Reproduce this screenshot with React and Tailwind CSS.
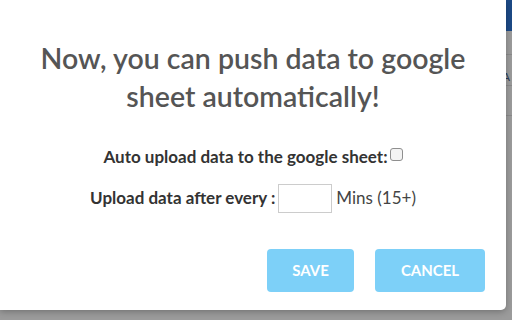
export default function App() {
  return (
    <div className="relative w-[512px] h-[320px] overflow-hidden bg-[#9b9b9b] font-['Lato','Liberation_Sans',sans-serif]">
      {/* dimmed page behind the dialog */}
      <div className="flex flex-col h-full">
        <div className="h-[31px] bg-[#1c4a86]" />
        <div className="h-[24px] border-b border-[#8a8a8a]" />
        <div className="h-[31px] border-b border-[#8a8a8a] flex items-end justify-end pr-[2px] text-[11px] text-[#2a3a55]">A</div>
        <div className="h-[30px] border-b border-[#8a8a8a]" />
      </div>

      {/* dialog */}
      <div className="absolute left-0 top-0 w-[506px] h-[310px] bg-white rounded-br-[5px] shadow-[0_2px_6px_rgba(0,0,0,0.25)] flex flex-col items-center">
        <h1 className="mt-[39px] w-[460px] text-center text-[28.5px] font-semibold leading-[38px] text-[#555555]">
          Now, you can push data to google sheet automatically!
        </h1>

        <div className="mt-[29px] flex items-center text-[17px] font-bold text-[#333333]">
          <span>Auto upload data to the google sheet:</span>
          <input type="checkbox" className="appearance-none ml-[2px] w-[13px] h-[13px] mb-[4px] rounded-[3px] border border-[#8f8f8f] bg-[#f3f3f3]" />
        </div>

        <div className="mt-[14px] flex items-center text-[17px] text-[#333333]">
          <span className="font-bold">Upload data after every :</span>
          <input type="text" className="ml-[3px] w-[54px] h-[29px] border border-[#cccccc] outline-none" />
          <span className="ml-[4px] text-[#444444]">Mins (15+)</span>
        </div>

        <div className="mt-[36px] self-end mr-[21px] flex gap-[21px]">
          <button className="w-[87px] h-[43px] rounded-[4px] bg-[#7dd0f8] text-white text-[15px] font-bold">SAVE</button>
          <button className="w-[110px] h-[43px] rounded-[4px] bg-[#7dd0f8] text-white text-[15px] font-bold">CANCEL</button>
        </div>
      </div>
    </div>
  );
}
